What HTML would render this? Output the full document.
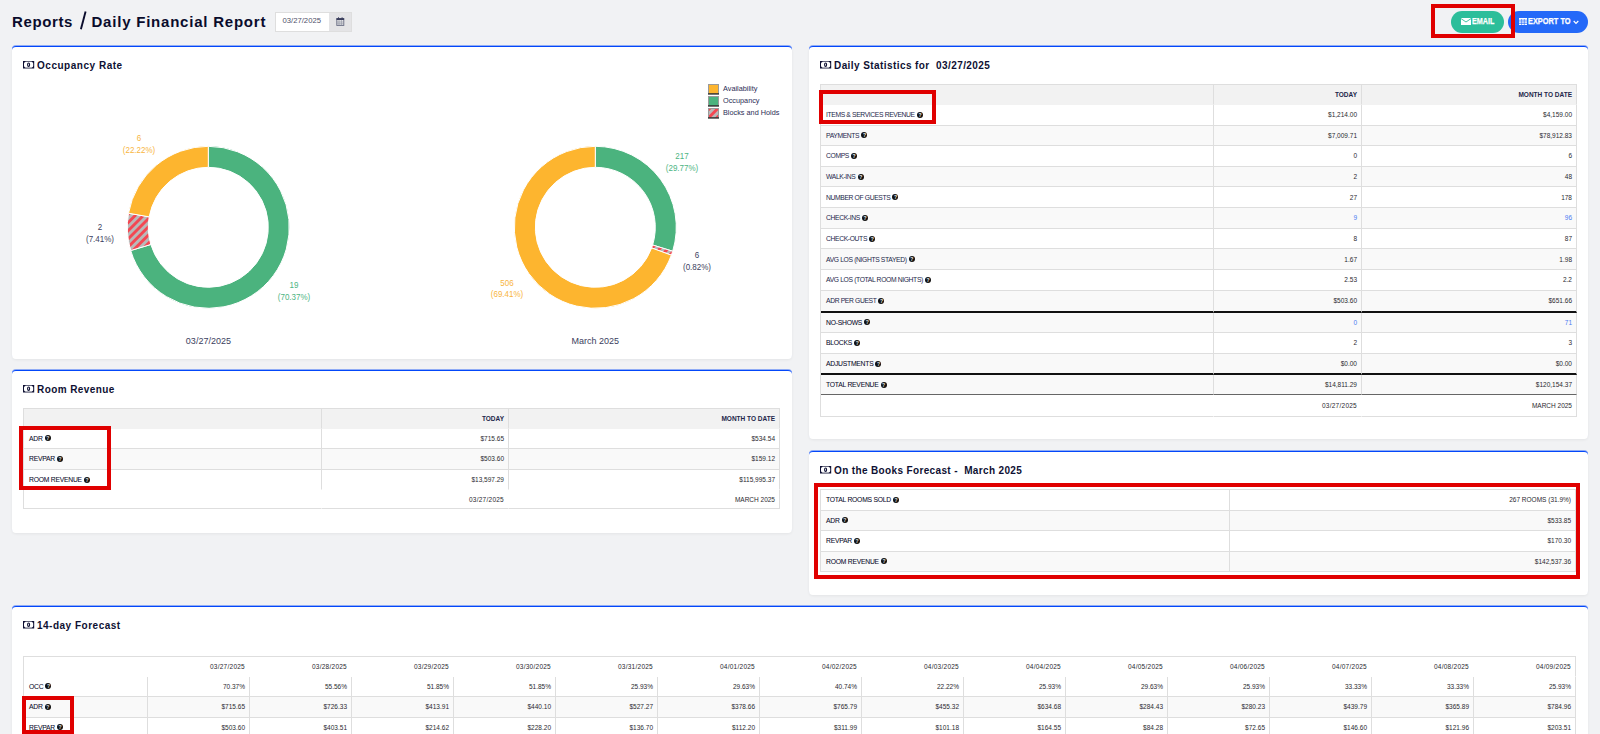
<!DOCTYPE html><html><head><meta charset="utf-8"><style>
*{box-sizing:border-box;margin:0;padding:0}
html,body{width:1600px;height:734px;overflow:hidden;background:#f1f2f4;font-family:"Liberation Sans",sans-serif;color:#10123a}
.abs{position:absolute}
.card{position:absolute;background:#fff;border-top:1px solid #0347fa;border-radius:4px;box-shadow:0 -1px 0 rgba(3,71,250,0.4),0 1px 3px rgba(0,0,0,0.06)}
.ct{position:absolute;font-weight:bold;font-size:10px;line-height:10px;color:#0e1033;white-space:nowrap}
table{border-collapse:separate;border-spacing:0;position:absolute;table-layout:fixed;font-size:6.5px;border-top:1px solid #dedede;border-left:1px solid #dedede}
td{border-right:1px solid #dedede;border-bottom:1px solid #dedede;padding:0 4px 0 5px;white-space:nowrap;overflow:hidden;text-align:right;color:#2a2a30;vertical-align:middle}
tr.h td{font-weight:bold;background:#f2f2f2;color:#23264a}
td.l{text-align:left;color:#24274a;letter-spacing:-0.36px;font-size:6.75px}
td.dt{letter-spacing:0.25px}
td.dk{color:#0a0c2a;-webkit-text-stroke:0.06px #0a0c2a;letter-spacing:-0.22px}
tr.s td{background:#f9f9f9}
tr.nb td{border-bottom-color:transparent}
tr.nv td{border-right-color:transparent}
tr.nv td:last-child{border-right-color:#dedede}
tr.kb td{border-bottom:2px solid #111}
tr.db td{border-bottom:1px solid #666}
.q{display:inline-block;width:6px;height:6px;border-radius:50%;background:#111;vertical-align:-0.6px;margin-left:2px;position:relative}
.q:after{content:"?";position:absolute;left:0;top:0;width:6px;line-height:6px;font-size:5px;font-weight:bold;color:#fff;text-align:center;font-style:normal}
.red{position:absolute;border:4px solid #e00000}
.lbl{position:absolute;font-size:7px;text-align:center;line-height:12px;white-space:nowrap;transform:translateX(-50%)}
.blue{color:#4a7bf2 !important}
</style></head><body>
<div style="position:absolute;top:13.6px;font-size:15px;line-height:16px;font-weight:bold;color:#0a0c2c;white-space:nowrap;left:12px;letter-spacing:0.62px">Reports</div>
<svg class="abs" style="left:78px;top:10px" width="10" height="21" viewBox="0 0 10 21"><path d="M7.6,1.6 L2.9,19.2" stroke="#0a0c2c" stroke-width="1.9"/></svg>
<div style="position:absolute;top:13.6px;font-size:15px;line-height:16px;font-weight:bold;color:#0a0c2c;white-space:nowrap;left:91.5px;letter-spacing:0.78px">Daily Financial Report</div>
<div class="abs" style="left:275px;top:12px;width:77px;height:20px;border:1px solid #dedede;background:#e4e4e6"></div>
<div class="abs" style="left:276px;top:13px;width:53px;height:18px;background:#fff;font-size:7.7px;line-height:15.6px;padding-left:6.5px;color:#50526a">03/27/2025</div>
<svg class="abs" style="left:335.5px;top:17px" width="9" height="9" viewBox="0 0 9 9"><rect x="0.8" y="1.6" width="7" height="6.8" fill="none" stroke="#666a80" stroke-width="0.9"/><rect x="0.5" y="1.2" width="7.6" height="1.8" fill="#3a3d5c"/><path d="M1,5 H7.6 M1,6.8 H7.6 M3,3 V8.4 M5.4,3 V8.4" stroke="#8a8ea0" stroke-width="0.6"/><rect x="2" y="0.3" width="1" height="1.6" fill="#3a3d5c"/><rect x="5.6" y="0.3" width="1" height="1.6" fill="#3a3d5c"/></svg>
<div class="abs" style="left:1451px;top:11px;width:53px;height:21.5px;border-radius:11px;background:#2cbe9a"></div>
<div class="abs" style="left:1508px;top:11px;width:80px;height:21.5px;border-radius:11px;background:#2469f8"></div>
<div style="position:absolute;font-size:9px;line-height:9px;font-weight:bold;color:#fff;-webkit-text-stroke:0.25px #fff;white-space:nowrap;transform-origin:0 0;left:1472px;top:16.5px;transform:scaleX(0.8)">EMAIL</div>
<div style="position:absolute;font-size:9px;line-height:9px;font-weight:bold;color:#fff;-webkit-text-stroke:0.25px #fff;white-space:nowrap;transform-origin:0 0;left:1528px;top:16.5px;transform:scaleX(0.82)">EXPORT TO</div>
<svg class="abs" style="left:1461px;top:17.5px" width="10" height="7" viewBox="0 0 10 7"><path d="M0,0 H10 V7 H0 Z" fill="#fff"/><path d="M0,0.6 L5,4 L10,0.6" fill="none" stroke="#2cbe9a" stroke-width="0.9"/></svg>
<svg class="abs" style="left:1519px;top:18px" width="8" height="7" viewBox="0 0 8 7"><rect width="8" height="7" fill="#fff"/><path d="M0,2.2H8M0,3.9H8M0,5.5H8M2.6,1V7M5.3,1V7" stroke="#2469f8" stroke-width="0.6"/></svg>
<svg class="abs" style="left:1573px;top:19.5px" width="6" height="5" viewBox="0 0 6 5"><path d="M0.7,1 L3,3.4 L5.3,1" fill="none" stroke="#fff" stroke-width="1.2"/></svg>
<div class="card" style="left:12px;top:46px;width:780px;height:313px"></div>
<div class="ct" style="left:37px;top:60.5px;letter-spacing:0.52px">Occupancy Rate</div>
<div class="card" style="left:809px;top:46px;width:779px;height:393px"></div>
<div class="ct" style="left:834px;top:60.5px;letter-spacing:0.42px">Daily Statistics for&nbsp; 03/27/2025</div>
<div class="card" style="left:12px;top:370px;width:780px;height:163px"></div>
<div class="ct" style="left:37px;top:384.5px;letter-spacing:0.42px">Room Revenue</div>
<div class="card" style="left:809px;top:451px;width:779px;height:144px"></div>
<div class="ct" style="left:834px;top:465.5px;letter-spacing:0.36px">On the Books Forecast -&nbsp; March 2025</div>
<div class="card" style="left:12px;top:606px;width:1576px;height:140px"></div>
<div class="ct" style="left:37px;top:620.5px;letter-spacing:0.5px">14-day Forecast</div>
<table style="left:820px;top:84px;width:757px;"><colgroup><col style="width:393px"><col style="width:148px"><col style="width:215px"></colgroup><tr class="h nb" style="height:19.5px"><td class="l" style=""></td><td class="" style="">TODAY</td><td class="" style="">MONTH TO DATE</td></tr><tr class="" style="height:21px"><td class="l" style="">ITEMS &amp; SERVICES REVENUE<i class="q"></i></td><td class="" style="">$1,214.00</td><td class="" style="">$4,159.00</td></tr><tr class="s" style="height:20.65px"><td class="l" style="">PAYMENTS<i class="q"></i></td><td class="" style="">$7,009.71</td><td class="" style="">$78,912.83</td></tr><tr class="" style="height:20.65px"><td class="l" style="">COMPS<i class="q"></i></td><td class="" style="">0</td><td class="" style="">6</td></tr><tr class="s" style="height:20.65px"><td class="l" style="">WALK-INS<i class="q"></i></td><td class="" style="">2</td><td class="" style="">48</td></tr><tr class="" style="height:20.65px"><td class="l" style="">NUMBER OF GUESTS<i class="q"></i></td><td class="" style="">27</td><td class="" style="">178</td></tr><tr class="s" style="height:20.65px"><td class="l" style="">CHECK-INS<i class="q"></i></td><td class="blue" style="">9</td><td class="blue" style="">96</td></tr><tr class="" style="height:20.65px"><td class="l" style="">CHECK-OUTS<i class="q"></i></td><td class="" style="">8</td><td class="" style="">87</td></tr><tr class="s" style="height:20.65px"><td class="l" style="">AVG LOS (NIGHTS STAYED)<i class="q"></i></td><td class="" style="">1.67</td><td class="" style="">1.98</td></tr><tr class="" style="height:20.65px"><td class="l" style="">AVG LOS (TOTAL ROOM NIGHTS)<i class="q"></i></td><td class="" style="">2.53</td><td class="" style="">2.2</td></tr><tr class="s kb" style="height:22.1px"><td class="l" style="">ADR PER GUEST<i class="q"></i></td><td class="" style="">$503.60</td><td class="" style="">$651.66</td></tr><tr class="s" style="height:20.2px"><td class="l dk" style="">NO-SHOWS<i class="q"></i></td><td class="blue" style="">0</td><td class="blue" style="">71</td></tr><tr class="" style="height:21px"><td class="l dk" style="">BLOCKS<i class="q"></i></td><td class="" style="">2</td><td class="" style="">3</td></tr><tr class="s kb" style="height:21.4px"><td class="l dk" style="">ADJUSTMENTS<i class="q"></i></td><td class="" style="">$0.00</td><td class="" style="">$0.00</td></tr><tr class="s db" style="height:19.9px"><td class="l dk" style="">TOTAL REVENUE<i class="q"></i></td><td class="" style="">$14,811.29</td><td class="" style="">$120,154.37</td></tr><tr class="nv" style="height:21.6px"><td class="l" style=""></td><td class="dt" style="">03/27/2025</td><td class="" style="">MARCH 2025</td></tr></table>
<table style="left:23px;top:408px;width:757px;"><colgroup><col style="width:298px"><col style="width:187px"><col style="width:271px"></colgroup><tr class="h nb" style="height:20px"><td class="l" style=""></td><td class="" style="">TODAY</td><td class="" style="">MONTH TO DATE</td></tr><tr class="" style="height:19.7px"><td class="l dk" style="">ADR<i class="q"></i></td><td class="" style="">$715.65</td><td class="" style="">$534.54</td></tr><tr class="s" style="height:21.3px"><td class="l dk" style="">REVPAR<i class="q"></i></td><td class="" style="">$503.60</td><td class="" style="">$159.12</td></tr><tr class="nb" style="height:20.5px"><td class="l dk" style="">ROOM REVENUE<i class="q"></i></td><td class="" style="">$13,597.29</td><td class="" style="">$115,995.37</td></tr><tr class="nv" style="height:19px"><td class="l" style=""></td><td class="dt" style="">03/27/2025</td><td class="" style="">MARCH 2025</td></tr></table>
<table style="left:820px;top:489px;width:756px;"><colgroup><col style="width:409px"><col style="width:346px"></colgroup><tr class="" style="height:20.5px"><td class="l dk" style="">TOTAL ROOMS SOLD<i class="q"></i></td><td class="" style="">267 ROOMS (31.9%)</td></tr><tr class="s" style="height:20.5px"><td class="l dk" style="">ADR<i class="q"></i></td><td class="" style="">$533.85</td></tr><tr class="" style="height:20.5px"><td class="l dk" style="">REVPAR<i class="q"></i></td><td class="" style="">$170.30</td></tr><tr class="s" style="height:20.5px"><td class="l dk" style="">ROOM REVENUE<i class="q"></i></td><td class="" style="">$142,537.36</td></tr></table>
<table style="left:23px;top:656px;width:1553px;"><colgroup><col style="width:124px"><col style="width:102px"><col style="width:102px"><col style="width:102px"><col style="width:102px"><col style="width:102px"><col style="width:102px"><col style="width:102px"><col style="width:102px"><col style="width:102px"><col style="width:102px"><col style="width:102px"><col style="width:102px"><col style="width:102px"><col style="width:102px"></colgroup><tr class="nv nb" style="height:19.5px"><td class="l" style=""></td><td class="dt" style="">03/27/2025</td><td class="dt" style="">03/28/2025</td><td class="dt" style="">03/29/2025</td><td class="dt" style="">03/30/2025</td><td class="dt" style="">03/31/2025</td><td class="dt" style="">04/01/2025</td><td class="dt" style="">04/02/2025</td><td class="dt" style="">04/03/2025</td><td class="dt" style="">04/04/2025</td><td class="dt" style="">04/05/2025</td><td class="dt" style="">04/06/2025</td><td class="dt" style="">04/07/2025</td><td class="dt" style="">04/08/2025</td><td class="dt" style="">04/09/2025</td></tr><tr class="" style="height:20px"><td class="l dk" style="">OCC<i class="q"></i></td><td class="" style="">70.37%</td><td class="" style="">55.56%</td><td class="" style="">51.85%</td><td class="" style="">51.85%</td><td class="" style="">25.93%</td><td class="" style="">29.63%</td><td class="" style="">40.74%</td><td class="" style="">22.22%</td><td class="" style="">25.93%</td><td class="" style="">29.63%</td><td class="" style="">25.93%</td><td class="" style="">33.33%</td><td class="" style="">33.33%</td><td class="" style="">25.93%</td></tr><tr class="s" style="height:21px"><td class="l dk" style="">ADR<i class="q"></i></td><td class="" style="">$715.65</td><td class="" style="">$726.33</td><td class="" style="">$413.91</td><td class="" style="">$440.10</td><td class="" style="">$527.27</td><td class="" style="">$378.66</td><td class="" style="">$765.79</td><td class="" style="">$455.32</td><td class="" style="">$634.68</td><td class="" style="">$284.43</td><td class="" style="">$280.23</td><td class="" style="">$439.79</td><td class="" style="">$365.89</td><td class="" style="">$784.96</td></tr><tr class="" style="height:20.5px"><td class="l dk" style="">REVPAR<i class="q"></i></td><td class="" style="">$503.60</td><td class="" style="">$403.51</td><td class="" style="">$214.62</td><td class="" style="">$228.20</td><td class="" style="">$136.70</td><td class="" style="">$112.20</td><td class="" style="">$311.99</td><td class="" style="">$101.18</td><td class="" style="">$164.55</td><td class="" style="">$84.28</td><td class="" style="">$72.65</td><td class="" style="">$146.60</td><td class="" style="">$121.96</td><td class="" style="">$203.51</td></tr></table>
<svg class="abs" style="left:0;top:0" width="800" height="360" viewBox="0 0 800 360"><defs><pattern id="hatch" patternUnits="userSpaceOnUse" width="5.8" height="5.8" patternTransform="rotate(45)"><rect width="5.8" height="5.8" fill="#f44752"/><rect width="2.9" height="5.8" fill="#b9b9b9"/></pattern></defs><path d="M208.30,146.30 A81,81 0 1 1 130.70,250.53 L150.82,244.51 A60,60 0 1 0 208.30,167.30 Z" fill="#4bb37e" stroke="#fff" stroke-width="1"/><path d="M130.70,250.53 A81,81 0 0 1 128.53,213.22 L149.21,216.87 A60,60 0 0 0 150.82,244.51 Z" fill="url(#hatch)" stroke="#fff" stroke-width="1"/><path d="M128.53,213.22 A81,81 0 0 1 208.30,146.30 L208.30,167.30 A60,60 0 0 0 149.21,216.87 Z" fill="#fdb52f" stroke="#fff" stroke-width="1"/><path d="M595.30,146.30 A81,81 0 0 1 672.69,251.21 L652.63,245.01 A60,60 0 0 0 595.30,167.30 Z" fill="#4bb37e" stroke="#fff" stroke-width="1"/><path d="M672.69,251.21 A81,81 0 0 1 671.35,255.17 L651.64,247.94 A60,60 0 0 0 652.63,245.01 Z" fill="url(#hatch)" stroke="#fff" stroke-width="1"/><path d="M671.35,255.17 A81,81 0 1 1 595.30,146.30 L595.30,167.30 A60,60 0 1 0 651.64,247.94 Z" fill="#fdb52f" stroke="#fff" stroke-width="1"/><rect x="708.5" y="84.5" width="10" height="9.5" fill="#fdb52f" stroke="#9a9a9a" stroke-width="1"/><rect x="708" y="93.3" width="11" height="1.2" fill="#222"/><rect x="708.5" y="96.5" width="10" height="9.5" fill="#4bb37e" stroke="#9a9a9a" stroke-width="1"/><rect x="708" y="105.3" width="11" height="1.2" fill="#222"/><rect x="708.5" y="108.5" width="10" height="9.5" fill="url(#hatch)" stroke="#9a9a9a" stroke-width="1"/><rect x="708" y="117.3" width="11" height="1.2" fill="#222"/></svg>
<div class="lbl" style="left:139px;top:132.30px;color:#f8b540;font-size:8.9px;transform:translateX(-50%) scaleX(0.9)">6</div>
<div class="lbl" style="left:139px;top:144.00px;color:#f8b540;font-size:8.9px;transform:translateX(-50%) scaleX(0.9)">(22.22%)</div>
<div class="lbl" style="left:100px;top:221.40px;color:#3b3e5e;font-size:8.9px;transform:translateX(-50%) scaleX(0.9)">2</div>
<div class="lbl" style="left:100px;top:232.70px;color:#3b3e5e;font-size:8.9px;transform:translateX(-50%) scaleX(0.9)">(7.41%)</div>
<div class="lbl" style="left:294px;top:279.40px;color:#4db483;font-size:8.9px;transform:translateX(-50%) scaleX(0.9)">19</div>
<div class="lbl" style="left:294px;top:291.40px;color:#4db483;font-size:8.9px;transform:translateX(-50%) scaleX(0.9)">(70.37%)</div>
<div class="lbl" style="left:208.4px;top:334.6px;color:#3b3e5e;font-size:9px">03/27/2025</div>
<div class="lbl" style="left:682px;top:150.00px;color:#4db483;font-size:8.9px;transform:translateX(-50%) scaleX(0.9)">217</div>
<div class="lbl" style="left:682px;top:161.70px;color:#4db483;font-size:8.9px;transform:translateX(-50%) scaleX(0.9)">(29.77%)</div>
<div class="lbl" style="left:697px;top:249.20px;color:#3b3e5e;font-size:8.9px;transform:translateX(-50%) scaleX(0.9)">6</div>
<div class="lbl" style="left:697px;top:261.40px;color:#3b3e5e;font-size:8.9px;transform:translateX(-50%) scaleX(0.9)">(0.82%)</div>
<div class="lbl" style="left:507px;top:276.80px;color:#f8b540;font-size:8.9px;transform:translateX(-50%) scaleX(0.9)">506</div>
<div class="lbl" style="left:507px;top:288.00px;color:#f8b540;font-size:8.9px;transform:translateX(-50%) scaleX(0.9)">(69.41%)</div>
<div class="lbl" style="left:595.3px;top:334.6px;color:#3b3e5e;font-size:9px">March 2025</div>
<div class="abs" style="left:723px;top:84px;font-size:7.3px;line-height:10px;color:#2b2e55;white-space:nowrap">Availability</div>
<div class="abs" style="left:723px;top:96px;font-size:7.3px;line-height:10px;color:#2b2e55;white-space:nowrap">Occupancy</div>
<div class="abs" style="left:723px;top:108px;font-size:7.3px;line-height:10px;color:#2b2e55;white-space:nowrap">Blocks and Holds</div>
<svg class="abs" style="left:23px;top:60.8px" width="12" height="8" viewBox="0 0 12 8"><path d="M0,0 H11.2 V7.4 H0 Z M2.4,1 Q1,1 1,2.6 V4.8 Q1,6.4 2.4,6.4 H8.8 Q10.2,6.4 10.2,4.8 V2.6 Q10.2,1 8.8,1 Z" fill="#0e1033" fill-rule="evenodd"/><rect x="2.4" y="0.3" width="6.4" height="0.6" fill="#fff" opacity="0.6"/><rect x="2.4" y="6.5" width="6.4" height="0.6" fill="#fff" opacity="0.6"/><ellipse cx="5.6" cy="3.7" rx="1.0" ry="1.7" fill="none" stroke="#0e1033" stroke-width="1.1"/></svg>
<svg class="abs" style="left:820px;top:60.8px" width="12" height="8" viewBox="0 0 12 8"><path d="M0,0 H11.2 V7.4 H0 Z M2.4,1 Q1,1 1,2.6 V4.8 Q1,6.4 2.4,6.4 H8.8 Q10.2,6.4 10.2,4.8 V2.6 Q10.2,1 8.8,1 Z" fill="#0e1033" fill-rule="evenodd"/><rect x="2.4" y="0.3" width="6.4" height="0.6" fill="#fff" opacity="0.6"/><rect x="2.4" y="6.5" width="6.4" height="0.6" fill="#fff" opacity="0.6"/><ellipse cx="5.6" cy="3.7" rx="1.0" ry="1.7" fill="none" stroke="#0e1033" stroke-width="1.1"/></svg>
<svg class="abs" style="left:23px;top:384.8px" width="12" height="8" viewBox="0 0 12 8"><path d="M0,0 H11.2 V7.4 H0 Z M2.4,1 Q1,1 1,2.6 V4.8 Q1,6.4 2.4,6.4 H8.8 Q10.2,6.4 10.2,4.8 V2.6 Q10.2,1 8.8,1 Z" fill="#0e1033" fill-rule="evenodd"/><rect x="2.4" y="0.3" width="6.4" height="0.6" fill="#fff" opacity="0.6"/><rect x="2.4" y="6.5" width="6.4" height="0.6" fill="#fff" opacity="0.6"/><ellipse cx="5.6" cy="3.7" rx="1.0" ry="1.7" fill="none" stroke="#0e1033" stroke-width="1.1"/></svg>
<svg class="abs" style="left:820px;top:465.8px" width="12" height="8" viewBox="0 0 12 8"><path d="M0,0 H11.2 V7.4 H0 Z M2.4,1 Q1,1 1,2.6 V4.8 Q1,6.4 2.4,6.4 H8.8 Q10.2,6.4 10.2,4.8 V2.6 Q10.2,1 8.8,1 Z" fill="#0e1033" fill-rule="evenodd"/><rect x="2.4" y="0.3" width="6.4" height="0.6" fill="#fff" opacity="0.6"/><rect x="2.4" y="6.5" width="6.4" height="0.6" fill="#fff" opacity="0.6"/><ellipse cx="5.6" cy="3.7" rx="1.0" ry="1.7" fill="none" stroke="#0e1033" stroke-width="1.1"/></svg>
<svg class="abs" style="left:23px;top:620.8px" width="12" height="8" viewBox="0 0 12 8"><path d="M0,0 H11.2 V7.4 H0 Z M2.4,1 Q1,1 1,2.6 V4.8 Q1,6.4 2.4,6.4 H8.8 Q10.2,6.4 10.2,4.8 V2.6 Q10.2,1 8.8,1 Z" fill="#0e1033" fill-rule="evenodd"/><rect x="2.4" y="0.3" width="6.4" height="0.6" fill="#fff" opacity="0.6"/><rect x="2.4" y="6.5" width="6.4" height="0.6" fill="#fff" opacity="0.6"/><ellipse cx="5.6" cy="3.7" rx="1.0" ry="1.7" fill="none" stroke="#0e1033" stroke-width="1.1"/></svg>
<div class="red" style="left:1431px;top:4px;width:84px;height:34px"></div>
<div class="red" style="left:819px;top:90px;width:117px;height:34px"></div>
<div class="red" style="left:19px;top:426px;width:92px;height:64px"></div>
<div class="red" style="left:814px;top:483px;width:766px;height:96px"></div>
<div class="red" style="left:22px;top:696px;width:52px;height:38px"></div>
</body></html>
